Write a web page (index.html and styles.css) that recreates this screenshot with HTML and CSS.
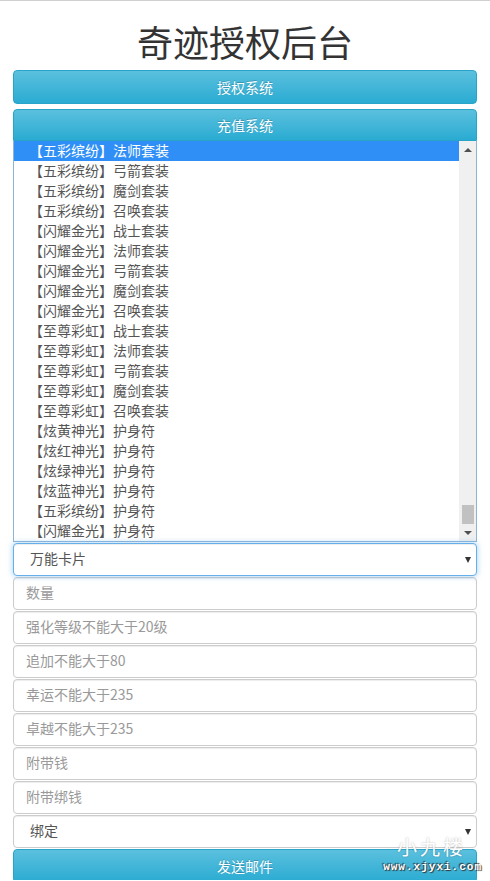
FILE: index.html
```html
<!DOCTYPE html>
<html lang="zh-CN">
<head>
    <meta charset="UTF-8">
    <meta name="viewport" content="width=device-width, initial-scale=1.0">
    <title>奇迹授权后台</title>
    <link rel="stylesheet" href="styles.css">
</head>
<body>
    <div class="page">
        <h1>奇迹授权后台</h1>
        <button class="btn">授权系统</button>
        <button class="btn btn-tab">充值系统</button>

        <div class="listbox">
            <div class="options">
                <div class="opt selected">【五彩缤纷】法师套装</div>
                <div class="opt">【五彩缤纷】弓箭套装</div>
                <div class="opt">【五彩缤纷】魔剑套装</div>
                <div class="opt">【五彩缤纷】召唤套装</div>
                <div class="opt">【闪耀金光】战士套装</div>
                <div class="opt">【闪耀金光】法师套装</div>
                <div class="opt">【闪耀金光】弓箭套装</div>
                <div class="opt">【闪耀金光】魔剑套装</div>
                <div class="opt">【闪耀金光】召唤套装</div>
                <div class="opt">【至尊彩虹】战士套装</div>
                <div class="opt">【至尊彩虹】法师套装</div>
                <div class="opt">【至尊彩虹】弓箭套装</div>
                <div class="opt">【至尊彩虹】魔剑套装</div>
                <div class="opt">【至尊彩虹】召唤套装</div>
                <div class="opt">【炫黄神光】护身符</div>
                <div class="opt">【炫红神光】护身符</div>
                <div class="opt">【炫绿神光】护身符</div>
                <div class="opt">【炫蓝神光】护身符</div>
                <div class="opt">【五彩缤纷】护身符</div>
                <div class="opt">【闪耀金光】护身符</div>
            </div>
            <div class="scrollbar">
                <span class="arrow up"></span>
                <span class="track"><span class="thumb"></span></span>
                <span class="arrow down"></span>
            </div>
        </div>

        <div class="select-wrap focus">
            <select class="field">
                <option>万能卡片</option>
            </select>
        </div>
        <input class="field" type="text" placeholder="数量">
        <input class="field" type="text" placeholder="强化等级不能大于20级">
        <input class="field" type="text" placeholder="追加不能大于80">
        <input class="field" type="text" placeholder="幸运不能大于235">
        <input class="field" type="text" placeholder="卓越不能大于235">
        <input class="field" type="text" placeholder="附带钱">
        <input class="field" type="text" placeholder="附带绑钱">
        <div class="select-wrap">
            <select class="field">
                <option>绑定</option>
            </select>
        </div>
        <button class="btn">发送邮件</button>
    </div>

    <div class="watermark">
        <span class="wm-name">小九楼</span>
        <span class="wm-url">www.xjyxi.com</span>
    </div>
</body>
</html>
```

FILE: styles.css
```css
* {
    box-sizing: border-box;
}

body {
    margin: 0;
    border-top: 1px solid #d0d0d0;
    font-family: "Noto Sans CJK SC", "Liberation Sans", sans-serif;
    font-size: 14px;
    color: #333;
    background: #fff;
    height: 880px;
    overflow: hidden;
    position: relative;
}

.page {
    padding: 0 13px;
}

h1 {
    margin: 0;
    padding-top: 18px;
    height: 69px;
    font-size: 36px;
    font-weight: 400;
    line-height: 44px;
    text-align: center;
    color: #333;
}

.btn {
    display: block;
    width: 100%;
    height: 34px;
    margin: 0 0 5px;
    padding: 0 0 1px;
    border: 1px solid #28a4c9;
    border-radius: 4px;
    background: linear-gradient(to bottom, #5bc0de, #2aabd2);
    color: #fff;
    font-family: inherit;
    font-size: 14px;
    text-shadow: 0 -1px 0 rgba(0, 0, 0, 0.2);
}

.btn-tab {
    height: 32px;
    margin-bottom: 0;
    border-radius: 4px 4px 0 0;
}

.listbox {
    display: flex;
    height: 401px;
    border: 1px solid #8fb4d6;
    border-top: none;
    margin-bottom: 1px;
}

.options {
    flex: 1;
}

.opt {
    height: 20px;
    line-height: 19px;
    padding-left: 15px;
    color: #555;
    white-space: nowrap;
}

.opt.selected {
    background: #2f8ff7;
    color: #fff;
}

.scrollbar {
    width: 17px;
    background: #f0f0f0;
    display: flex;
    flex-direction: column;
}

.arrow {
    height: 17px;
    display: flex;
    align-items: center;
    justify-content: center;
}

.arrow::after {
    content: "";
    border-left: 4px solid transparent;
    border-right: 4px solid transparent;
}

.arrow.up::after {
    border-bottom: 4px solid #505050;
}

.arrow.down::after {
    border-top: 4px solid #505050;
}

.track {
    flex: 1;
    position: relative;
}

.thumb {
    position: absolute;
    left: 3px;
    right: 2px;
    bottom: 0;
    height: 19px;
    background: #c1c1c1;
}

.field {
    display: block;
    width: 100%;
    height: 33px;
    margin: 0 0 1px;
    padding: 4px 12px 7px;
    border: 1px solid #ccc;
    border-radius: 4px;
    box-shadow: inset 0 1px 1px rgba(0, 0, 0, 0.075);
    background: #fff;
    color: #555;
    font-family: inherit;
    font-size: 14px;
    outline: none;
}

.field::placeholder {
    color: #999;
}

.select-wrap {
    position: relative;
}

.select-wrap select {
    appearance: none;
    -webkit-appearance: none;
    padding-left: 16px;
}

.select-wrap::after {
    content: "";
    position: absolute;
    right: 6px;
    top: 14px;
    border-left: 3.5px solid transparent;
    border-right: 3.5px solid transparent;
    border-top: 6px solid #333;
    pointer-events: none;
}

.select-wrap.focus select {
    border-color: #66afe9;
    box-shadow: inset 0 1px 1px rgba(0, 0, 0, 0.075), 0 0 6px rgba(102, 175, 233, 0.6);
}

.watermark {
    position: absolute;
    right: 8px;
    bottom: 7px;
    display: flex;
    flex-direction: column;
    align-items: flex-end;
    gap: 3px;
    color: #fff;
    pointer-events: none;
}

.wm-name {
    font-size: 20px;
    line-height: 22px;
    letter-spacing: 3px;
    margin-right: 16px;
    text-shadow: 0 0 2px rgba(0, 0, 0, 0.3);
}

.wm-url {
    font-family: "Liberation Mono", monospace;
    font-weight: bold;
    font-size: 11px;
    line-height: 12px;
    letter-spacing: 1px;
    text-shadow: 1px 1px 1px #333, -1px -1px 1px #333;
}
```
